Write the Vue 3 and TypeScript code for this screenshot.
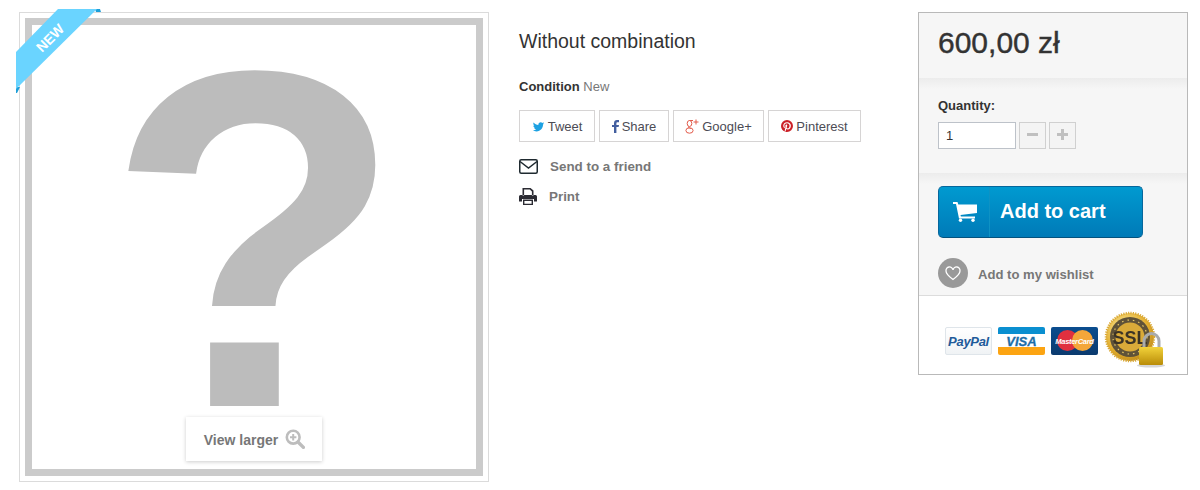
<script setup lang="ts">
interface Share { label: string; cls: string; width: number }
const shares: Share[] = [
  { label: 'Tweet', cls: 'tw', width: 76 },
  { label: 'Share', cls: 'fb', width: 70 },
  { label: 'Google+', cls: 'gp', width: 91 },
  { label: 'Pinterest', cls: 'pi', width: 93 },
]
</script>

<template>
  <div class="page">
    <section class="gallery">
      <div class="frame">
        <div class="placeholder">
          <svg class="qmark" width="444" height="444" viewBox="0 0 444 444">
            <text transform="translate(74 381) scale(1.012 1)" class="qmark-text">?</text>
          </svg>
        </div>
        <div class="larger">
          <span class="larger-text">View larger</span>
          <svg width="20" height="20" viewBox="0 0 20 20" aria-hidden="true">
            <circle cx="8.200" cy="8.200" r="6.400" fill="none" stroke="#bdbdbd" stroke-width="2.600" />
            <path d="M13 13l5.400 5.400" stroke="#bdbdbd" stroke-width="3.400" stroke-linecap="round" />
            <path d="M8.200 5v6.400M5 8.200h6.400" stroke="#bdbdbd" stroke-width="2" />
          </svg>
        </div>
      </div>
      <svg class="ribbon" width="90" height="90" viewBox="0 0 90 90" aria-hidden="true">
        <path d="M0 78L4 78 1 84 0 84zM79 0L84 0 85 3 80 3z" fill="#1e9fd8" />
        <path d="M0 43L42 0H81L0 80z" fill="#6ad4ff" />
      </svg>
      <span class="new">NEW</span>
    </section>

    <section class="info">
      <h1 class="title">Without combination</h1>
      <p class="condition"><b>Condition</b> New</p>
      <div class="shares">
        <button v-for="s in shares" :key="s.label" class="share" :style="{ width: s.width + 'px' }">
          <svg v-if="s.cls === 'tw'" width="13" height="13" viewBox="0 0 24 24" aria-hidden="true">
            <path fill="#1da1e2" d="M22.460 6c-.77.35-1.600.58-2.460.69.88-.53 1.560-1.370 1.880-2.380-.83.5-1.750.85-2.720 1.050C18.370 4.500 17.260 4 16 4c-2.350 0-4.270 1.920-4.270 4.290 0 .34.04.67.11.98C8.280 9.090 5.110 7.380 3 4.790c-.37.63-.58 1.370-.58 2.150 0 1.490.75 2.810 1.910 3.560-.71 0-1.370-.2-1.950-.5v.03c0 2.080 1.480 3.820 3.440 4.210a4.220 4.220 0 0 1-1.930.07 4.280 4.280 0 0 0 4 2.980 8.521 8.521 0 0 1-5.330 1.840c-.34 0-.68-.02-1.020-.06C3.440 20.290 5.700 21 8.120 21 16 21 20.330 14.460 20.330 8.790c0-.19 0-.37-.01-.56.84-.6 1.560-1.360 2.140-2.230z" />
          </svg>
          <svg v-else-if="s.cls === 'fb'" width="7" height="13" viewBox="0 0 7 13" aria-hidden="true">
            <path fill="#435f9f" d="M2 13V7H0V5h2V3.200C2 1 3.200 0 5 0h2v2.200H5.600C4.700 2.200 4.400 2.600 4.400 3.400V5H7L6.600 7H4.400v6z" />
          </svg>
          <svg v-else-if="s.cls === 'gp'" width="14" height="15" viewBox="0 0 14 15" aria-hidden="true">
            <g fill="none" stroke="#e25b4b" stroke-width="1">
              <ellipse cx="4.500" cy="4.500" rx="2.300" ry="3" />
              <ellipse cx="4.500" cy="11.500" rx="3.600" ry="2.700" />
              <path d="M3.500 7.500c-1 1.500 2.500 1.500 2.500 2.500M4.500 1.500H8M11 .5v5M8.500 3h5" />
            </g>
          </svg>
          <svg v-else width="12" height="12" viewBox="2 2 20 20" aria-hidden="true">
            <path fill="#cb2027" d="M9.040 21.540c.96.29 1.930.46 2.960.46a10 10 0 0 0 10-10A10 10 0 0 0 12 2 10 10 0 0 0 2 12c0 4.250 2.670 7.900 6.440 9.340-.09-.78-.18-2.070 0-2.960l1.150-4.940s-.29-.58-.29-1.500c0-1.380.86-2.410 1.840-2.410.86 0 1.260.63 1.260 1.440 0 .86-.57 2.090-.86 3.270-.17.98.52 1.840 1.520 1.840 1.780 0 3.160-1.900 3.160-4.580 0-2.400-1.720-4.040-4.190-4.040-2.820 0-4.480 2.100-4.480 4.310 0 .86.28 1.730.74 2.300.09.06.09.14.06.29l-.29 1.090c0 .17-.11.23-.28.11-1.280-.56-2.020-2.380-2.020-3.850 0-3.160 2.240-6.030 6.560-6.030 3.440 0 6.120 2.470 6.120 5.750 0 3.440-2.130 6.200-5.180 6.200-.97 0-1.920-.52-2.260-1.130l-.67 2.370c-.23.86-.86 2.010-1.320 2.700v-.03z" />
          </svg>
          <span>{{ s.label }}</span>
        </button>
      </div>
      <div class="action send">
        <svg width="19" height="15" viewBox="0 0 19 15" aria-hidden="true">
          <rect x=".75" y=".75" width="17.500" height="13.500" rx="1.500" fill="none" stroke="#1f2a30" stroke-width="1.500" />
          <path d="M1 2.500l8.500 6.500L18 2.500" fill="none" stroke="#1f2a30" stroke-width="1.500" />
        </svg>
        <span>Send to a friend</span>
      </div>
      <div class="action print">
        <svg width="18" height="17" viewBox="0 0 18 17" aria-hidden="true">
          <path fill="#2b2b33" fill-rule="evenodd" d="M3.500 0h8l3 2.500V7.500h-1.600V3.500L10.800 1.500H5.100V7.500H3.500zM1.500 7h15A1.500 1.500 0 0 1 18 8.500V13.500h-3V11H3v2.500H0V8.500A1.500 1.500 0 0 1 1.500 7zM4 11.500h10V17H4zM5.400 13v2.700h7.200V13z" />
        </svg>
        <span>Print</span>
      </div>
    </section>

    <aside class="buy">
      <div class="price">600,00 zł</div>
      <div class="qty">
        <label class="qty-label">Quantity:</label>
        <div class="qty-row">
          <div class="qty-input">1</div>
          <button class="step"><i class="bar"></i></button>
          <button class="step"><i class="bar"></i><i class="bar vert"></i></button>
        </div>
      </div>
      <div class="cart-area">
        <button class="cart">
          <span class="cart-icon">
            <svg width="24" height="20" viewBox="0 0 24 20" aria-hidden="true">
              <path fill="#fff" d="M0 0h4.500l.8 2.500H24v8.500L7.500 13l.4 1.500H22V16.500H6L3 2H0z" />
              <circle cx="7.500" cy="18.300" r="1.700" fill="#fff" />
              <circle cx="20" cy="18.300" r="1.700" fill="#fff" />
            </svg>
          </span>
          <span class="cart-text">Add to cart</span>
        </button>
        <div class="wish">
          <span class="wish-icon">
            <svg width="16" height="15" viewBox="0 0 16 15" aria-hidden="true">
              <path fill="none" stroke="#fff" stroke-width="1.300" d="M8 13.500C3 9.800 1 7.500 1 5a3.500 3.500 0 0 1 7-1 3.500 3.500 0 0 1 7 1c0 2.500-2 4.800-7 8.500z" />
            </svg>
          </span>
          <span class="wish-text">Add to my wishlist</span>
        </div>
      </div>
      <div class="pay">
        <div class="card paypal"><span>PayPal</span></div>
        <div class="card visa"><span>VISA</span></div>
        <div class="card mc">
          <i class="disc red"></i><i class="disc orange"></i>
          <span>MasterCard</span>
        </div>
        <svg class="seal" width="62" height="58" viewBox="0 0 62 58" aria-hidden="true">
          <defs>
            <radialGradient id="gold" cx=".4" cy=".35" r=".8">
              <stop offset="0" stop-color="#fff0a8" />
              <stop offset=".6" stop-color="#e2ad2c" />
              <stop offset="1" stop-color="#a87512" />
            </radialGradient>
            <linearGradient id="lock" x1="0" y1="0" x2="0" y2="1">
              <stop offset="0" stop-color="#f2d23a" />
              <stop offset="1" stop-color="#b98c08" />
            </linearGradient>
          </defs>
          <circle cx="26" cy="27" r="24" fill="url(#gold)" stroke="#d9a836" stroke-width="2.500" stroke-dasharray="1.200 1.200" />
          <circle cx="26" cy="27" r="20" fill="#5f5238" />
          <circle cx="26" cy="27" r="14.500" fill="#d9aa39" />
          <circle cx="26" cy="27" r="17" fill="none" stroke="#e8c766" stroke-width="1.200" stroke-dasharray="1.500 4" />
          <text x="26" y="33.500" text-anchor="middle" class="seal-text">SSL</text>
          <ellipse cx="47" cy="55.500" rx="14" ry="2" fill="#d6d6d6" />
          <path d="M40 38v-7a7.500 7.500 0 0 1 15 0v7" fill="none" stroke="#a9abad" stroke-width="3" />
          <rect x="35" y="37" width="24" height="18" rx="1.500" fill="url(#lock)" />
        </svg>
      </div>
    </aside>
  </div>
</template>

<style>
html, body { margin: 0; background: #fff; }
</style>

<style scoped>
.page {
  display: flex;
  align-items: flex-start;
  padding: 12px 0 0 19px;
  font-family: "Liberation Sans", Arial, sans-serif;
  color: #777;
}
.gallery { position: relative; width: 470px; flex: none; }
.frame {
  box-sizing: border-box;
  height: 470px;
  padding: 5px;
  border: 1px solid #dbdbdb;
  position: relative;
}
.placeholder {
  box-sizing: border-box;
  width: 458px;
  height: 458px;
  border: 7px solid #cbcbcb;
  filter: blur(.5px);
}
.qmark { display: block; filter: blur(.6px); }
.qmark-text {
  font: 700 481px "Liberation Sans", Arial, sans-serif;
  fill: #bcbcbc;
}
.larger {
  position: absolute;
  left: 166px;
  top: 404px;
  box-sizing: border-box;
  width: 136px;
  height: 44px;
  padding-left: 1px;
  display: flex;
  align-items: center;
  justify-content: center;
  gap: 7px;
  background: #fff;
  box-shadow: 0 1px 4px rgba(0, 0, 0, .2);
  font-size: 14px;
  font-weight: 700;
  color: #777;
}
.larger-text { padding-top: 2px; }
.ribbon { position: absolute; left: -3px; top: -3px; }
.new {
  position: absolute;
  left: 9px;
  top: 18px;
  width: 44px;
  text-align: center;
  color: #fff;
  font-size: 14px;
  font-weight: 700;
  transform: rotate(-45deg);
}
.info { width: 399px; margin-left: 30px; flex: none; }
.title {
  margin: 16px 0 0;
  font-size: 19.500px;
  line-height: 26px;
  font-weight: 400;
  color: #333;
}
.condition { margin: 25px 0 0; font-size: 13px; line-height: 16px; color: #777; }
.condition b { color: #333; }
.shares { display: flex; gap: 4px; margin-top: 15px; }
.share {
  box-sizing: border-box;
  height: 32px;
  padding: 0;
  display: flex;
  align-items: center;
  justify-content: center;
  gap: 3px;
  background: #fff;
  border: 1px solid #d6d4d4;
  font: 400 13px "Liberation Sans", Arial, sans-serif;
  color: #4c4c55;
}
.action { display: flex; align-items: center; font-size: 13.400px; font-weight: 700; color: #777; }
.send { margin-top: 15px; gap: 12px; height: 18px; }
.print { margin-top: 12px; gap: 12px; height: 18px; }
.buy {
  box-sizing: border-box;
  width: 270px;
  height: 363px;
  flex: none;
  border: 1px solid #b9b9b9;
  background: #f6f6f6;
  display: flex;
  flex-direction: column;
}
.price {
  box-sizing: border-box;
  height: 65px;
  padding: 12px 0 0 19px;
  font-size: 30px;
  line-height: 36px;
  color: #333;
  -webkit-text-stroke: .4px #333;
}
.qty {
  box-sizing: border-box;
  height: 95px;
  padding: 20px 0 0 19px;
  background: linear-gradient(#ececec, #f6f6f6 11px);
}
.qty-label { display: block; font-size: 13px; line-height: 16px; font-weight: 700; color: #333; }
.qty-row { display: flex; gap: 3px; margin-top: 8px; }
.qty-input {
  box-sizing: border-box;
  width: 78px;
  height: 27px;
  padding-left: 7px;
  background: #fff;
  border: 1px solid #bdc2c9;
  font-size: 13px;
  line-height: 25px;
  color: #333;
}
.step {
  position: relative;
  box-sizing: border-box;
  width: 27px;
  height: 27px;
  padding: 0;
  background: #f4f4f4;
  border: 1px solid #d0d0d0;
}
.bar {
  position: absolute;
  left: 7px;
  top: 10px;
  width: 11px;
  height: 3px;
  background: #c0c0c0;
}
.bar.vert { left: 11px; top: 6px; width: 3px; height: 11px; }
.cart-area {
  box-sizing: border-box;
  height: 122px;
  padding: 13px 0 0 19px;
  background: linear-gradient(#ececec, #f6f6f6 11px);
}
.cart {
  box-sizing: border-box;
  width: 205px;
  height: 52px;
  padding: 0;
  display: flex;
  align-items: stretch;
  border: 1px solid #06679c;
  border-bottom-color: #04527e;
  border-radius: 5px;
  background: linear-gradient(#009ad0, #007ab7);
  color: #fff;
  font: 700 20px "Liberation Sans", Arial, sans-serif;
}
.cart-icon {
  box-sizing: border-box;
  width: 51px;
  padding-left: 2px;
  display: flex;
  align-items: center;
  justify-content: center;
  border-right: 1px solid #0e92c4;
}
.cart-text { padding-left: 10px; line-height: 49px; }
.wish {
  display: flex;
  align-items: center;
  gap: 10px;
  margin-top: 20px;
  font-size: 13.100px;
  font-weight: 700;
  color: #777;
}
.wish-text { padding-top: 3px; }
.wish-icon {
  width: 30px;
  height: 30px;
  border-radius: 50%;
  background: #999;
  display: flex;
  align-items: center;
  justify-content: center;
}
.pay {
  flex: 1;
  position: relative;
  display: flex;
  gap: 6px;
  padding: 31px 0 0 26px;
  background: #fff;
  border-top: 1px solid #dcdcdc;
}
.card {
  position: relative;
  box-sizing: border-box;
  width: 47px;
  height: 28px;
  border-radius: 2px;
  overflow: hidden;
  display: flex;
  align-items: center;
  justify-content: center;
  font-weight: 700;
  font-style: italic;
}
.paypal { border: 1px solid #dfe5ea; background: linear-gradient(#fff, #f0f3f5); color: #1f5a9a; font-size: 13px; letter-spacing: -.3px; }
.visa {
  background: linear-gradient(#0a8fd0 0 7px, #fff 7px 20px, #fca412 20px);
  color: #1c6ea8;
  font-size: 13px;
  -webkit-text-stroke: .3px #1c6ea8;
}
.mc { background: linear-gradient(#0a4d8f, #0b3a6e); color: #fff; font-size: 7.500px; letter-spacing: -.3px; }
.mc span { position: relative; }
.disc { position: absolute; top: 3px; width: 21px; height: 21px; border-radius: 50%; }
.disc.red { left: 6px; background: #e0303f; }
.disc.orange { left: 21px; background: #f4a63a; }
.seal { margin: -17px 0 0 0; filter: blur(.3px); }
.seal-text { font: 700 18px "Liberation Sans", Arial, sans-serif; fill: #3b3325; }
</style>
